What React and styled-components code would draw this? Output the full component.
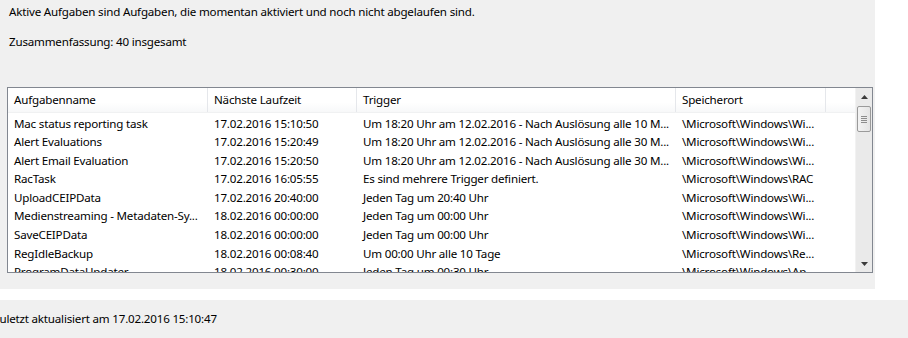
import React from "react"
import styled, { createGlobalStyle } from "styled-components"

const GlobalStyle = createGlobalStyle`
  html, body {
    margin: 0;
    padding: 0;
    background: #ffffff;
  }
  body {
    font-family: "Noto Sans", "Open Sans", sans-serif;
    font-size: 11.6px;
    letter-spacing: -0.2px;
    color: #000000;
    overflow: hidden;
  }
`

const columns = [
  { key: "name", title: "Aufgabenname", width: 200 },
  { key: "next", title: "Nächste Laufzeit", width: 149 },
  { key: "trigger", title: "Trigger", width: 319 },
  { key: "path", title: "Speicherort", width: 150 },
  { key: "extra", title: "", width: 28 },
]

const rows = [
  ["Mac status reporting task", "17.02.2016 15:10:50", "Um 18:20 Uhr am 12.02.2016 - Nach Auslösung alle 10 M...", "\\Microsoft\\Windows\\Wi..."],
  ["Alert Evaluations", "17.02.2016 15:20:49", "Um 18:20 Uhr am 12.02.2016 - Nach Auslösung alle 30 M...", "\\Microsoft\\Windows\\Wi..."],
  ["Alert Email Evaluation", "17.02.2016 15:20:50", "Um 18:20 Uhr am 12.02.2016 - Nach Auslösung alle 30 M...", "\\Microsoft\\Windows\\Wi..."],
  ["RacTask", "17.02.2016 16:05:55", "Es sind mehrere Trigger definiert.", "\\Microsoft\\Windows\\RAC"],
  ["UploadCEIPData", "17.02.2016 20:40:00", "Jeden Tag um 20:40 Uhr", "\\Microsoft\\Windows\\Wi..."],
  ["Medienstreaming - Metadaten-Sy...", "18.02.2016 00:00:00", "Jeden Tag um 00:00 Uhr", "\\Microsoft\\Windows\\Wi..."],
  ["SaveCEIPData", "18.02.2016 00:00:00", "Jeden Tag um 00:00 Uhr", "\\Microsoft\\Windows\\Wi..."],
  ["RegIdleBackup", "18.02.2016 00:08:40", "Um 00:00 Uhr alle 10 Tage", "\\Microsoft\\Windows\\Re..."],
  ["ProgramDataUpdater", "18.02.2016 00:30:00", "Jeden Tag um 00:30 Uhr", "\\Microsoft\\Windows\\Ap..."],
]

const App = () => {
  return (
    <>
      <GlobalStyle />
      <Page>
        <TopPanel>
          <Line>Aktive Aufgaben sind Aufgaben, die momentan aktiviert und noch nicht abgelaufen sind.</Line>
          <Summary>Zusammenfassung: 40 insgesamt</Summary>
          <ListView>
            <ListBody>
              <HeaderRow>
                {columns.map((c) => (
                  <HeaderCell key={c.key} $width={c.width}>
                    {c.title}
                  </HeaderCell>
                ))}
              </HeaderRow>
              <Rows>
                {rows.map((r, i) => (
                  <Row key={i}>
                    {r.map((cell, j) => (
                      <Cell key={j} $width={columns[j].width}>
                        {cell}
                      </Cell>
                    ))}
                  </Row>
                ))}
              </Rows>
            </ListBody>
            <ScrollBar>
              <ArrowButton>
                <svg width="7" height="4" viewBox="0 0 7 4">
                  <path d="M0 4 L3.5 0 L7 4 Z" fill="#3b3b3b" />
                </svg>
              </ArrowButton>
              <Track>
                <Thumb>
                  <Grip />
                  <Grip />
                  <Grip />
                  <Grip />
                </Thumb>
              </Track>
              <ArrowButton>
                <svg width="7" height="4" viewBox="0 0 7 4">
                  <path d="M0 0 L7 0 L3.5 4 Z" fill="#3b3b3b" />
                </svg>
              </ArrowButton>
            </ScrollBar>
          </ListView>
        </TopPanel>
        <Gap />
        <StatusBar>Zuletzt aktualisiert am 17.02.2016 15:10:47</StatusBar>
      </Page>
    </>
  )
}

const Page = styled.div`
  display: flex;
  flex-direction: column;
  width: 908px;
  height: 338px;
  overflow: hidden;
`

const TopPanel = styled.div`
  width: 875px;
  height: 289px;
  background: #f0f0f0;
  box-sizing: border-box;
  padding: 4px 0 0 7px;
  display: flex;
  flex-direction: column;
`

const Line = styled.div`
  padding-left: 2px;
  line-height: 16px;
  height: 16px;
  white-space: nowrap;
`

const Summary = styled(Line)`
  margin-top: 14px;
`

const ListView = styled.div`
  margin-top: 37px;
  width: 866px;
  height: 186px;
  box-sizing: border-box;
  border: 1px solid #828790;
  background: #ffffff;
  display: flex;
  overflow: hidden;
`

const ListBody = styled.div`
  flex: 1;
  display: flex;
  flex-direction: column;
  overflow: hidden;
`

const HeaderRow = styled.div`
  display: flex;
  height: 24px;
  flex-shrink: 0;
  background: linear-gradient(#ffffff 0%, #ffffff 60%, #f7f8f9 100%);
  border-bottom: 1px solid #f0f1f2;
`

const HeaderCell = styled.div`
  width: ${(p) => p.$width}px;
  flex-shrink: 0;
  box-sizing: border-box;
  padding-left: 6px;
  line-height: 24px;
  white-space: nowrap;
  overflow: hidden;
  border-right: 1px solid #e5e7eb;
  &:last-child {
    border-right: none;
  }
`

const Rows = styled.div`
  display: flex;
  flex-direction: column;
  padding-top: 1.5px;
`

const Row = styled.div`
  display: flex;
  height: 18.6px;
  flex-shrink: 0;
`

const Cell = styled.div`
  width: ${(p) => p.$width}px;
  flex-shrink: 0;
  box-sizing: border-box;
  padding-left: 6px;
  line-height: 18.6px;
  white-space: nowrap;
  overflow: hidden;
`

const ScrollBar = styled.div`
  width: 17px;
  flex-shrink: 0;
  display: flex;
  flex-direction: column;
  background: #eaeaea;
  border-left: 1px solid #f2f2f2;
  box-sizing: border-box;
`

const ArrowButton = styled.div`
  height: 17px;
  display: flex;
  align-items: center;
  justify-content: center;
  flex-shrink: 0;
`

const Track = styled.div`
  flex: 1;
  padding: 1px 1px;
`

const Thumb = styled.div`
  height: 26px;
  box-sizing: border-box;
  border: 1px solid #9a9a9a;
  border-radius: 2px;
  background: linear-gradient(90deg, #f3f3f3, #e4e4e4);
  display: flex;
  flex-direction: column;
  align-items: center;
  justify-content: center;
  gap: 1px;
`

const Grip = styled.div`
  width: 6px;
  height: 1px;
  background: #8d8d8d;
`

const Gap = styled.div`
  height: 11px;
  flex-shrink: 0;
`

const StatusBar = styled.div`
  height: 38px;
  background: #f0f0f0;
  line-height: 38px;
  margin-left: -7px;
  padding-right: 7px;
  white-space: nowrap;
`

export default App
